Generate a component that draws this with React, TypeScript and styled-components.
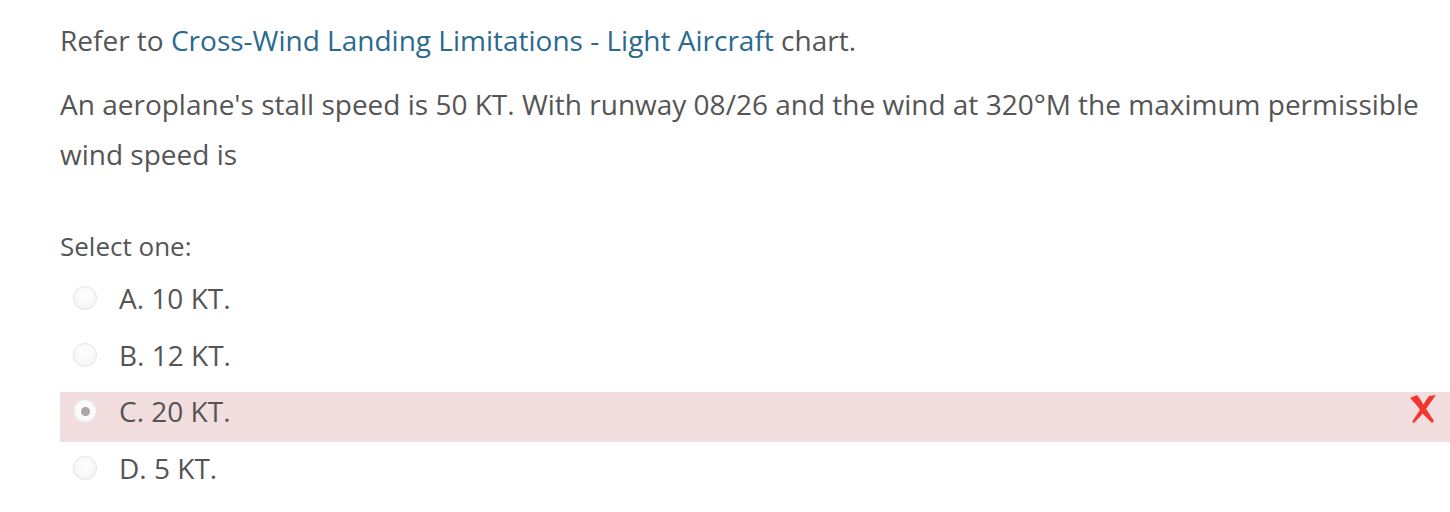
import React from "react";
import styled, { createGlobalStyle } from "styled-components";

const Global = createGlobalStyle`
  html, body { margin: 0; padding: 0; background: #fff; }
  body { font-family: "Open Sans", "Noto Sans", sans-serif; color: #555; }
`;

const Page = styled.div`
  padding: 15px 0 0 60px;
`;

const Para = styled.p<{ $mb?: number }>`
  margin: 0 0 ${(p) => p.$mb ?? 0}px 0;
  font-size: 28px;
  line-height: 50px;
  color: #555;
  max-width: 1380px;
`;

const Link = styled.a`
  color: #2b6a8f;
  text-decoration: none;
`;

const Prompt = styled.div`
  font-size: 26px;
  line-height: 40px;
  color: #555;
  margin: -1px 0 13px;
`;

const Options = styled.div`
  display: flex;
  flex-direction: column;
  gap: 6.5px;
`;

const Row = styled.div<{ $wrong?: boolean }>`
  display: flex;
  align-items: flex-start;
  height: 50px;
  background: ${(p) => (p.$wrong ? "#f2dede" : "transparent")};
  position: relative;
`;

const Radio = styled.span<{ $checked?: boolean }>`
  flex: none;
  width: 24px;
  height: 24px;
  margin: 7px 22px 0 13px;
  border-radius: 50%;
  border: 1px solid #e4e4e4;
  background: radial-gradient(circle at 50% 40%, #ffffff 0%, #f8f8f8 60%, #eeeeee 100%);
  display: flex;
  align-items: center;
  justify-content: center;
  box-sizing: border-box;
  &::after {
    content: "";
    display: ${(p) => (p.$checked ? "block" : "none")};
    width: 9px;
    height: 9px;
    border-radius: 50%;
    background: #aaa5a7;
  }
`;

const Label = styled.span`
  font-size: 28px;
  line-height: 38px;
  color: #555;
`;

const Mark = styled.svg`
  position: absolute;
  right: 13px;
  top: 2px;
`;

const options = [
  { key: "A", text: "10 KT." },
  { key: "B", text: "12 KT." },
  { key: "C", text: "20 KT.", wrong: true },
  { key: "D", text: "5 KT." },
];

export default function App() {
  return (
    <>
      <Global />
      <Page>
        <Para $mb={14}>
          Refer to <Link href="#">Cross-Wind Landing Limitations - Light Aircraft</Link> chart.
        </Para>
        <Para $mb={48}>
          An aeroplane's stall speed is 50 KT. With runway 08/26 and the wind at 320°M the maximum permissible
          wind speed is
        </Para>
        <Prompt>Select one:</Prompt>
        <Options>
          {options.map((o) => (
            <Row key={o.key} $wrong={o.wrong}>
              <Radio $checked={o.wrong} />
              <Label>
                {o.key}. {o.text}
              </Label>
              {o.wrong && (
                <Mark width="28" height="30" viewBox="0 0 28 30">
                  <path d="M1 4 L8 1 Q13 7 15 12 Q20 19 25 27 L23 29 Q18 24 13 19 Q9 12 1 4 Z" fill="#f3372f" />
                  <path d="M27 1 L20 2 Q15 9 13 13 Q8 20 3 28 L5 29 Q11 23 15 18 Q21 9 27 1 Z" fill="#f3372f" />
                </Mark>
              )}
            </Row>
          ))}
        </Options>
      </Page>
    </>
  );
}
